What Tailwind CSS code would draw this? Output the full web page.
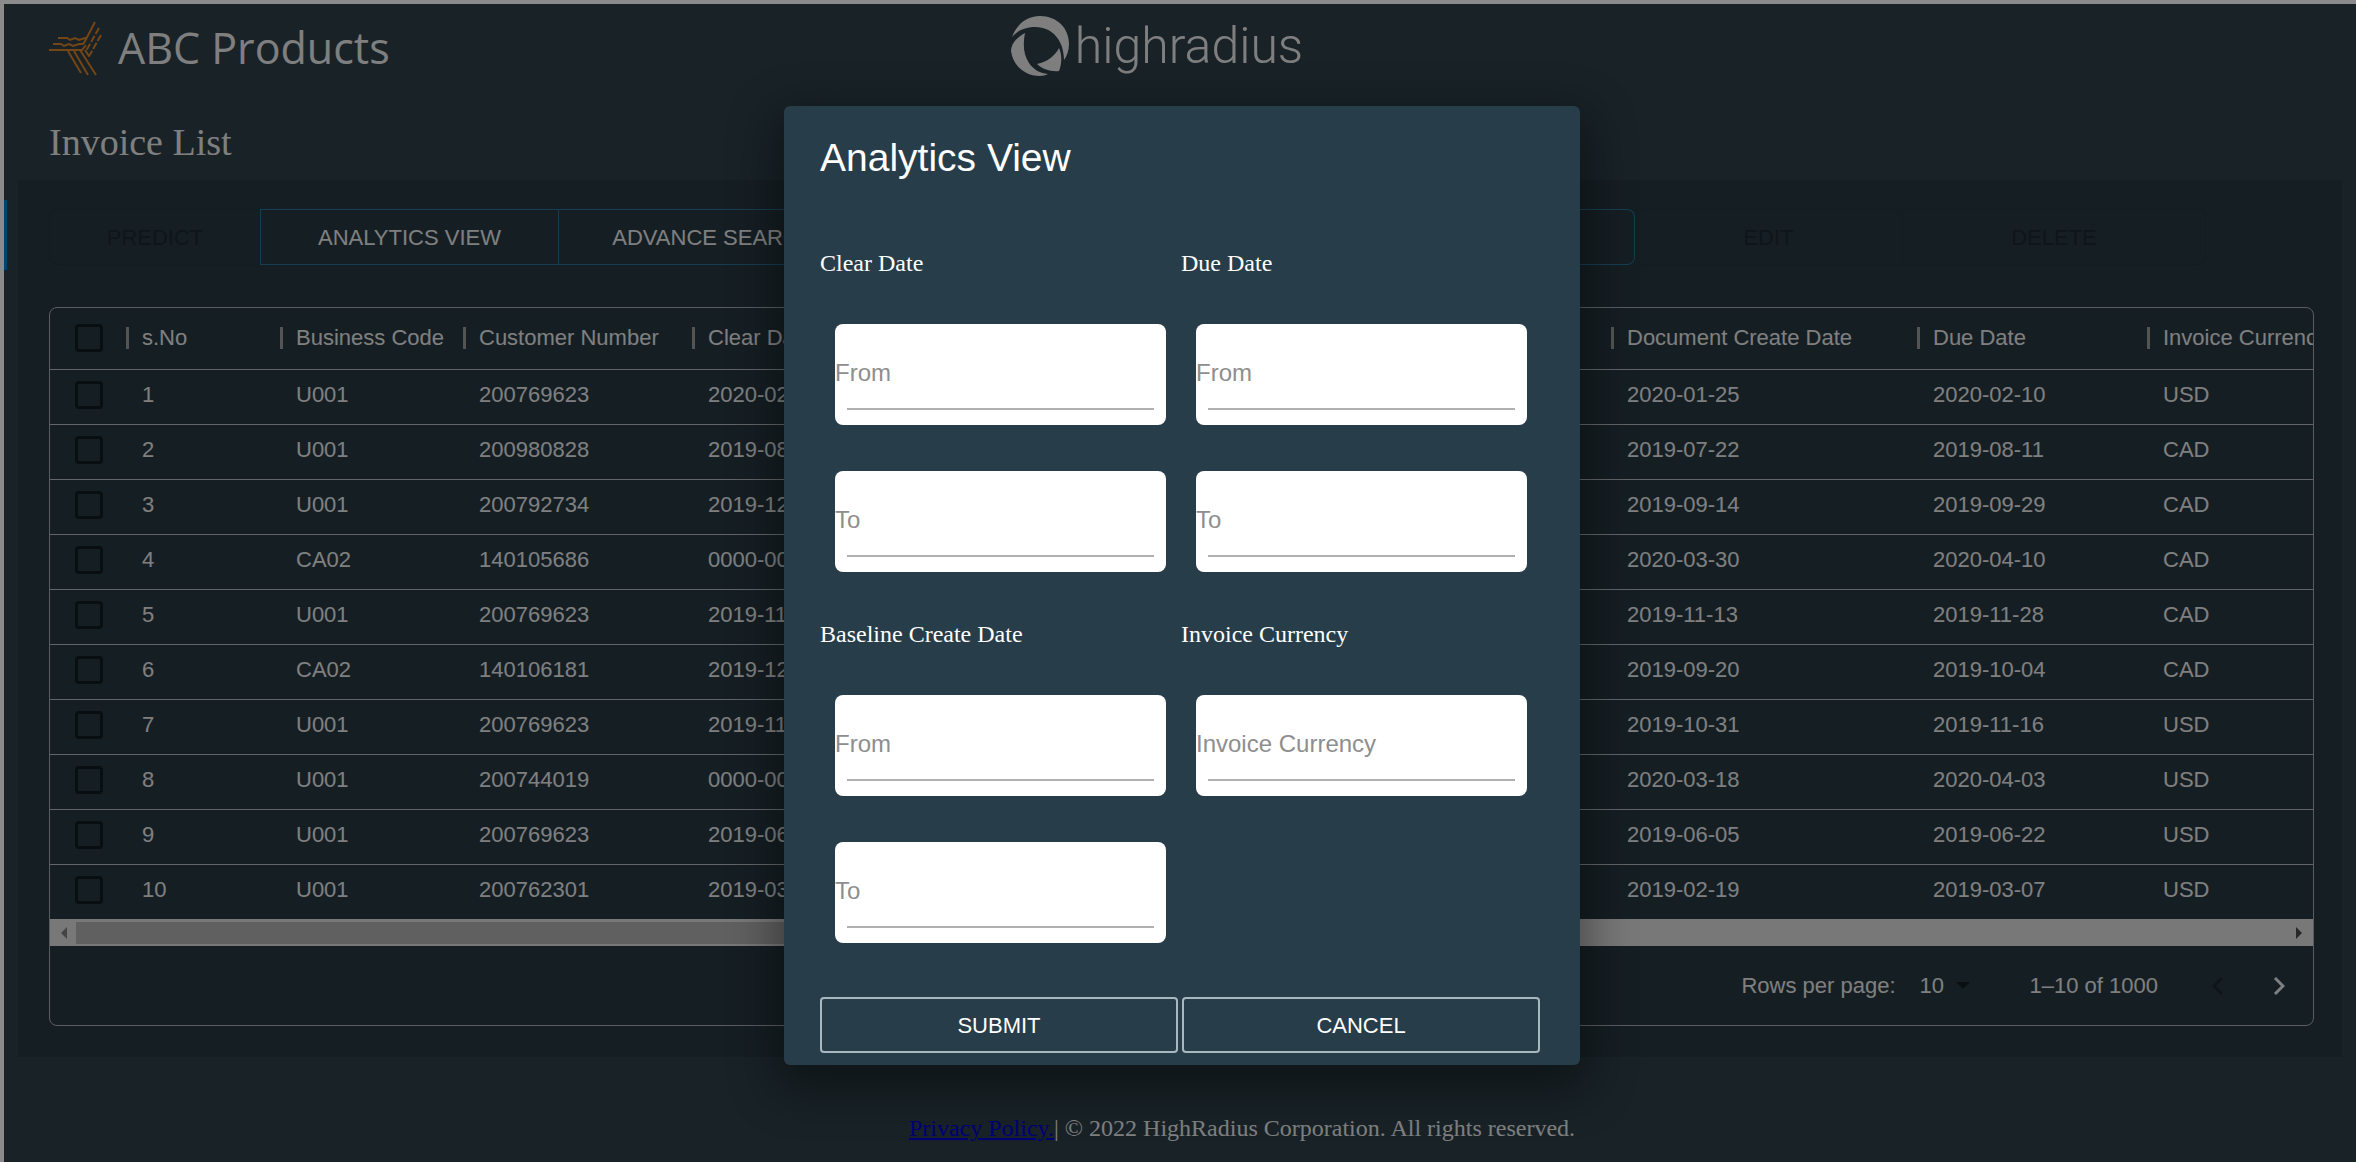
<!DOCTYPE html>
<html lang="en">
<head>
<meta charset="utf-8">
<title>Invoice List</title>
<script src="https://cdn.jsdelivr.net/npm/@tailwindcss/browser@4"></script>
</head>
<body class="bg-[#17222a]">
<div class="relative min-h-screen overflow-hidden border-t-4 border-l-4 border-[#8b8b8b] bg-[#30444e] font-['Liberation_Sans',sans-serif] text-[22px] text-white">
  <div class="absolute top-[196px] left-0 h-[70px] w-[3px] bg-[#0088e8]"></div>
  <header class="grid grid-cols-3 items-start pt-3">
    <div class="flex items-center gap-4 pl-[45px]">
      <svg class="h-[60px] w-[53px]" viewBox="0 0 53 60" fill="none" stroke="#e88b2a" stroke-width="2" aria-hidden="true">
        <path d="M9 20h9l3 2 5-2 4 2 6-2h2M4 26h8l3 2 5-2 4 2 6-2h4l2-3M0 32h33l4-5M46 4L35 25" />
        <path stroke-dasharray="7 2" d="M50 10L37 33M52 17L39 40" />
        <path d="M19 33l13 22M25 33l14 24M31 32l16 25M36 32l4 6" />
      </svg>
      <span class="font-['Open_Sans',sans-serif] text-[43px] leading-[64px]">ABC Products</span>
    </div>
    <div class="flex items-center justify-center pr-[46px]">
      <svg class="h-[60px] w-[60px]" viewBox="0 0 60 60" fill="#fff" aria-hidden="true">
        <path d="M1 21C6 8 16 0 29 0C46 0 58 12 58 28C58 34 56 40 53 44C53 25 42 11 24 11C14 11 6 15 1 21Z" />
        <path d="M14 17C5 22 0 28 0 35C2 50 14 60 29 60C32 60 35 59 37 58C28 57 22 53 18 47C12 38 12 27 14 17Z" />
        <path d="M48 32C51 38 51 48 48 55C40 56 31 53 26 48C36 46 44 40 48 32Z" />
      </svg>
      <span class="ml-1 font-[Roboto,sans-serif] text-[50px] leading-[60px] font-light">highradius</span>
    </div>
  </header>
  <h1 class="mt-8 pl-[45px] font-['Liberation_Serif',serif] text-[38px] leading-[60px]">Invoice List</h1>

  <main class="mx-[14px] mt-2 bg-[#2a3d47] pt-[29px] pr-[28px] pb-[31px] pl-[31px]">
    <div class="flex">
      <button disabled class="h-14 w-[211px] rounded-l-lg border border-r-0 border-[#263842] text-[#1d2c34]">PREDICT</button>
      <button class="h-14 w-[299px] border border-[#2c7aa5]">ANALYTICS VIEW</button>
      <button class="h-14 w-[310px] border border-l-0 border-[#2c7aa5]">ADVANCE SEARCH</button>
      <button aria-label="Refresh" class="h-14 w-[766px] rounded-r-lg border border-l-0 border-[#2c7aa5]"></button>
      <button disabled class="h-14 w-[268px] border border-l-0 border-[#263842] text-[#1d2c34]">EDIT</button>
      <button disabled class="h-14 w-[303px] rounded-r-lg border border-l-0 border-[#263842] text-[#1d2c34]">DELETE</button>
    </div>

    <section class="mt-[42px] rounded-lg border border-[#b4bbbf]">
      <div class="overflow-hidden">
        <table class="w-[2500px] table-fixed text-left">
          <thead>
            <tr class="h-[61px] border-b border-[#c4cace]">
              <th class="w-[76px] pl-[25px]"><input type="checkbox" aria-label="Select all" class="block size-7 appearance-none rounded-sm border-3 border-[#121c22]"></th>
              <th class="w-[154px] font-normal"><div class="border-l-3 border-[#a8a8a8] pl-[13px] leading-[22px]">s.No</div></th>
              <th class="w-[183px] font-normal"><div class="border-l-3 border-[#a8a8a8] pl-[13px] leading-[22px]">Business Code</div></th>
              <th class="w-[229px] font-normal"><div class="border-l-3 border-[#a8a8a8] pl-[13px] leading-[22px]">Customer Number</div></th>
              <th class="w-[919px] font-normal"><div class="border-l-3 border-[#a8a8a8] pl-[13px] leading-[22px]">Clear Date</div></th>
              <th class="w-[306px] font-normal"><div class="border-l-3 border-[#a8a8a8] pl-[13px] leading-[22px]">Document Create Date</div></th>
              <th class="w-[230px] font-normal"><div class="border-l-3 border-[#a8a8a8] pl-[13px] leading-[22px]">Due Date</div></th>
              <th class="font-normal"><div class="border-l-3 border-[#a8a8a8] pl-[13px] leading-[22px]">Invoice Currency</div></th>
            </tr>
          </thead>
          <tbody id="rows"></tbody>
        </table>
      </div>
      <div class="flex h-[27px] items-center justify-between bg-[#f1f1f1] px-2" aria-hidden="true">
        <svg class="size-3" viewBox="0 0 12 12" fill="#888"><path d="M9 0v12L3 6z" /></svg>
        <div class="mx-1.5 h-[22px] flex-1"><div class="h-full w-1/2 bg-[#c1c1c1]"></div></div>
        <svg class="size-3" viewBox="0 0 12 12" fill="#505050"><path d="M3 0v12l6-6z" /></svg>
      </div>
      <div class="flex h-[79px] items-center justify-end pr-5">
        <label for="per-page">Rows per page:</label>
        <select id="per-page" class="ml-6 w-7 appearance-none leading-7"><option>10</option></select>
        <svg class="ml-2 h-[7px] w-3.5" viewBox="0 0 16 8" fill="#141e24" aria-hidden="true"><path d="M0 0h16L8 8z" /></svg>
        <span class="ml-[60px]">1–10 of 1000</span>
        <button disabled aria-label="Previous page" class="ml-[54px]"><svg class="h-5 w-3" viewBox="0 0 12 20" fill="none" stroke="#1d2c34" stroke-width="3"><path d="M10 2L2 10l8 8" /></svg></button>
        <button aria-label="Next page" class="ml-[49px] mr-2"><svg class="h-5 w-3" viewBox="0 0 12 20" fill="none" stroke="#fff" stroke-width="3"><path d="M2 2l8 8-8 8" /></svg></button>
      </div>
    </section>
  </main>

  <footer class="mt-[51px] pb-3 pl-[124px] text-center font-['Liberation_Serif',serif] text-[24px] leading-[40px]"><a href="#privacy" class="text-[#0000ee] underline">Privacy Policy.</a>| © 2022 HighRadius Corporation. All rights reserved.</footer>

  <div class="absolute inset-0 flex items-start justify-center bg-black/50 pt-[102px] pl-1">
    <form role="dialog" aria-labelledby="dialog-title" class="w-[796px] rounded-md bg-[#283d4a] px-9 pt-[22px] pb-3 shadow-[0_16px_48px_8px_rgba(0,0,0,0.4)]">
      <h2 id="dialog-title" class="text-[39px] leading-[60px]">Analytics View</h2>
      <div class="mt-[55px] grid grid-cols-2 pr-0.5 font-['Liberation_Serif',serif] text-[24px]">
        <fieldset>
          <legend class="leading-10">Clear Date</legend>
          <div class="mt-[41px] flex flex-col gap-[46px] px-[15px]">
            <div class="h-[101px] rounded-lg bg-white px-3 pt-[30px]"><input aria-label="Clear date from" placeholder="From" class="-ml-3 block h-[38px] w-full bg-transparent font-['Liberation_Sans',sans-serif] placeholder:text-[#8e8e8e]"><div class="mt-4 h-0.5 bg-[#b0b0b0]"></div></div>
            <div class="h-[101px] rounded-lg bg-white px-3 pt-[30px]"><input aria-label="Clear date to" placeholder="To" class="-ml-3 block h-[38px] w-full bg-transparent font-['Liberation_Sans',sans-serif] placeholder:text-[#8e8e8e]"><div class="mt-4 h-0.5 bg-[#b0b0b0]"></div></div>
          </div>
        </fieldset>
        <fieldset>
          <legend class="leading-10">Due Date</legend>
          <div class="mt-[41px] flex flex-col gap-[46px] px-[15px]">
            <div class="h-[101px] rounded-lg bg-white px-3 pt-[30px]"><input aria-label="Due date from" placeholder="From" class="-ml-3 block h-[38px] w-full bg-transparent font-['Liberation_Sans',sans-serif] placeholder:text-[#8e8e8e]"><div class="mt-4 h-0.5 bg-[#b0b0b0]"></div></div>
            <div class="h-[101px] rounded-lg bg-white px-3 pt-[30px]"><input aria-label="Due date to" placeholder="To" class="-ml-3 block h-[38px] w-full bg-transparent font-['Liberation_Sans',sans-serif] placeholder:text-[#8e8e8e]"><div class="mt-4 h-0.5 bg-[#b0b0b0]"></div></div>
          </div>
        </fieldset>
        <fieldset class="mt-[42px]">
          <legend class="leading-10">Baseline Create Date</legend>
          <div class="mt-[41px] flex flex-col gap-[46px] px-[15px]">
            <div class="h-[101px] rounded-lg bg-white px-3 pt-[30px]"><input aria-label="Baseline create date from" placeholder="From" class="-ml-3 block h-[38px] w-full bg-transparent font-['Liberation_Sans',sans-serif] placeholder:text-[#8e8e8e]"><div class="mt-4 h-0.5 bg-[#b0b0b0]"></div></div>
            <div class="h-[101px] rounded-lg bg-white px-3 pt-[30px]"><input aria-label="Baseline create date to" placeholder="To" class="-ml-3 block h-[38px] w-full bg-transparent font-['Liberation_Sans',sans-serif] placeholder:text-[#8e8e8e]"><div class="mt-4 h-0.5 bg-[#b0b0b0]"></div></div>
          </div>
        </fieldset>
        <fieldset class="mt-[42px]">
          <legend class="leading-10">Invoice Currency</legend>
          <div class="mt-[41px] px-[15px]">
            <div class="h-[101px] rounded-lg bg-white px-3 pt-[30px]"><input aria-label="Invoice currency" placeholder="Invoice Currency" class="-ml-3 block h-[38px] w-full bg-transparent font-['Liberation_Sans',sans-serif] placeholder:text-[#8e8e8e]"><div class="mt-4 h-0.5 bg-[#b0b0b0]"></div></div>
          </div>
        </fieldset>
      </div>
      <div class="mt-[54px] grid grid-cols-2 gap-1 pr-1">
        <button type="submit" class="h-14 rounded-sm border-2 border-[#a9b8bf]">SUBMIT</button>
        <button type="button" class="h-14 rounded-sm border-2 border-[#a9b8bf]">CANCEL</button>
      </div>
    </form>
  </div>
</div>
<script>
  const rows = [
    ['U001', '200769623', '2020-02', '2020-01-25', '2020-02-10', 'USD'],
    ['U001', '200980828', '2019-08', '2019-07-22', '2019-08-11', 'CAD'],
    ['U001', '200792734', '2019-12', '2019-09-14', '2019-09-29', 'CAD'],
    ['CA02', '140105686', '0000-00', '2020-03-30', '2020-04-10', 'CAD'],
    ['U001', '200769623', '2019-11', '2019-11-13', '2019-11-28', 'CAD'],
    ['CA02', '140106181', '2019-12', '2019-09-20', '2019-10-04', 'CAD'],
    ['U001', '200769623', '2019-11', '2019-10-31', '2019-11-16', 'USD'],
    ['U001', '200744019', '0000-00', '2020-03-18', '2020-04-03', 'USD'],
    ['U001', '200769623', '2019-06', '2019-06-05', '2019-06-22', 'USD'],
    ['U001', '200762301', '2019-03', '2019-02-19', '2019-03-07', 'USD'],
  ];
  document.getElementById('rows').innerHTML = rows.map((r, i) =>
    `<tr class="h-[55px] border-b border-[#c4cace] last:border-b-0">
      <td class="pb-1 pl-[25px]"><input type="checkbox" aria-label="Select row ${i + 1}" class="block size-7 appearance-none rounded-sm border-3 border-[#121c22]"></td>
      ${[i + 1, ...r].map(c => `<td class="pb-1 pl-4 leading-7">${c}</td>`).join('')}
    </tr>`).join('');
</script>
</body>
</html>
